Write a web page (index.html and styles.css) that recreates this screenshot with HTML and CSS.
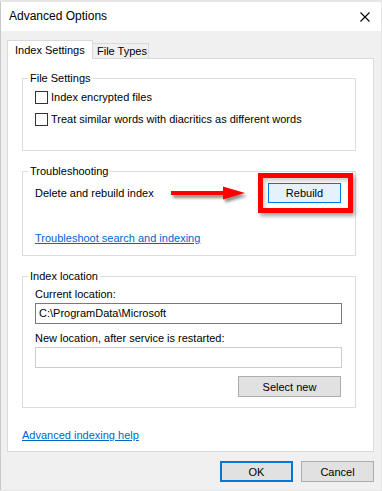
FILE: index.html
```html
<!DOCTYPE html>
<html>
<head>
<meta charset="utf-8">
<link rel="stylesheet" href="styles.css">
</head>
<body>
<div class="window">
  <div class="titlebar">
    <span class="title">Advanced Options</span>
    <svg class="close" width="10" height="10" viewBox="0 0 10 10"><path d="M0.5 0.5 L9.5 9.5 M9.5 0.5 L0.5 9.5" stroke="#000" stroke-width="1.1" fill="none"/></svg>
  </div>
  <div class="content">
    <div class="tabs">
      <div class="tab selected">Index Settings</div>
      <div class="tab">File Types</div>
    </div>
    <div class="panel">
      <fieldset class="group g1">
        <legend>File Settings</legend>
        <div class="check-row"><span class="checkbox"></span><span>Index encrypted files</span></div>
        <div class="check-row"><span class="checkbox"></span><span>Treat similar words with diacritics as different words</span></div>
      </fieldset>
      <fieldset class="group g2">
        <legend>Troubleshooting</legend>
        <div class="rebuild-row">
          <span>Delete and rebuild index</span>
          <svg class="arrow" width="78" height="20" viewBox="0 0 78 20">
            <defs>
              <filter id="sh" x="-10%" y="-40%" width="130%" height="200%">
                <feGaussianBlur in="SourceAlpha" stdDeviation="1.5"/>
                <feOffset dx="2" dy="3" result="b"/>
                <feComponentTransfer><feFuncA type="linear" slope="0.45"/></feComponentTransfer>
                <feMerge><feMergeNode/><feMergeNode in="SourceGraphic"/></feMerge>
              </filter>
            </defs>
            <g filter="url(#sh)">
              <rect x="0" y="6" width="56" height="4" fill="#f00"/>
              <polygon points="52,1.5 74,8 52,14.5" fill="#f00"/>
            </g>
          </svg>
          <span class="highlight"><button class="btn rebuild">Rebuild</button></span>
        </div>
        <a class="link ts-link">Troubleshoot search and indexing</a>
      </fieldset>
      <fieldset class="group g3">
        <legend>Index location</legend>
        <div class="label first">Current location:</div>
        <div class="input">C:\ProgramData\Microsoft</div>
        <div class="label">New location, after service is restarted:</div>
        <div class="input disabled"></div>
        <div class="select-row"><button class="btn select">Select new</button></div>
      </fieldset>
      <a class="link help">Advanced indexing help</a>
    </div>
    <div class="footer">
      <button class="btn ok">OK</button>
      <button class="btn cancel">Cancel</button>
    </div>
  </div>
</div>
</body>
</html>
```

FILE: styles.css
```css
html, body {
  margin: 0;
  padding: 0;
}
body {
  background: #e6e6e6;
  font-family: "Liberation Sans", Arial, sans-serif;
  font-size: 11px;
  line-height: 16px;
  color: #000;
}
.window {
  margin: 2px 1px 0 0;
  width: 381px;
  height: 488px;
  background: #f0f0f0;
  border-left: 1px solid #c8c8c8;
  box-sizing: border-box;
  display: flex;
  flex-direction: column;
}
.titlebar {
  height: 29px;
  background: #fff;
  display: flex;
  align-items: center;
  justify-content: space-between;
  padding: 0 11px 0 8px;
  flex: none;
}
.title {
  font-size: 12px;
  margin-top: -1px;
}
.close {
  display: block;
}
.content {
  padding: 9px 7px 0 6px;
  display: flex;
  flex-direction: column;
}
.tabs {
  display: flex;
  align-items: flex-end;
  height: 18px;
  position: relative;
  z-index: 1;
}
.tab {
  box-sizing: border-box;
  border: 1px solid #d9d9d9;
  border-bottom: none;
  background: #f0f0f0;
  height: 15px;
  padding: 0 0 0 4px;
  line-height: 15px;
  width: 56px;
}
.tab.selected {
  background: #fff;
  height: 19px;
  margin-bottom: -1px;
  width: 86px;
  padding: 1px 0 0 7px;
  border-right: 1px solid #d9d9d9;
  line-height: 16px;
}
.tab.selected + .tab {
  border-left: none;
}
.panel {
  background: #fff;
  border: 1px solid #d9d9d9;
  height: 394px;
  box-sizing: border-box;
  padding: 11px 17px 0 14px;
  display: flex;
  flex-direction: column;
}
.group {
  margin: 0;
  border: 1px solid #dcdcdc;
  padding: 0 13px 0 12px;
  min-width: 0;
}
.group legend {
  padding: 0 2px;
  margin-left: -7px;
  line-height: 16px;
}
.g1 {
  padding-bottom: 20px;
}
.g2 {
  margin-top: 12px;
  padding-bottom: 9px;
}
.g3 {
  margin-top: 12px;
  padding-bottom: 10px;
}
.check-row {
  height: 22px;
  display: flex;
  align-items: center;
}
.checkbox {
  width: 13px;
  height: 13px;
  box-sizing: border-box;
  border: 1px solid #333;
  background: #fff;
  margin-right: 3px;
  flex: none;
}
.rebuild-row {
  height: 28px;
  display: flex;
  align-items: center;
}
.arrow {
  margin-left: 17px;
  margin-top: 3px;
  flex: none;
}
.highlight {
  position: relative;
  margin-left: auto;
  margin-right: 1px;
  display: block;
}
.highlight::after {
  content: "";
  position: absolute;
  left: -10px;
  right: -12px;
  top: -10px;
  bottom: -10px;
  border: 5px solid #f00;
  box-shadow: 2px 3px 4px rgba(0,0,0,0.35), inset 2px 3px 4px rgba(0,0,0,0.2);
  pointer-events: none;
}
.btn {
  font-family: inherit;
  font-size: 11px;
  line-height: 16px;
  color: #000;
  background: #e1e1e1;
  border: 1px solid #adadad;
  box-sizing: border-box;
  height: 21px;
  padding: 0;
  margin: 0;
  display: block;
}
.rebuild {
  width: 73px;
  height: 20px;
  background: #e5f1fb;
  border-color: #0078d7;
}
.link {
  color: #0066cc;
  text-decoration: underline;
  display: block;
  width: max-content;
}
.ts-link {
  margin-top: 23px;
}
.label {
  margin-top: 6px;
}
.label.first {
  margin-top: 2px;
}
.input {
  margin-top: 1px;
  height: 21px;
  box-sizing: border-box;
  border: 1px solid #7a7a7a;
  padding: 1px 3px;
  line-height: 17px;
  background: #fff;
}
.input.disabled {
  border-color: #cccccc;
}
.select-row {
  margin-top: 8px;
  display: flex;
  justify-content: flex-end;
}
.select {
  width: 103px;
  margin-right: 1px;
}
.help {
  margin-top: 19px;
  margin-left: 0;
}
.footer {
  display: flex;
  justify-content: flex-end;
  gap: 8px;
  margin-top: 9px;
}
.ok, .cancel {
  width: 73px;
}
.ok {
  border: 2px solid #0078d7;
}
```
